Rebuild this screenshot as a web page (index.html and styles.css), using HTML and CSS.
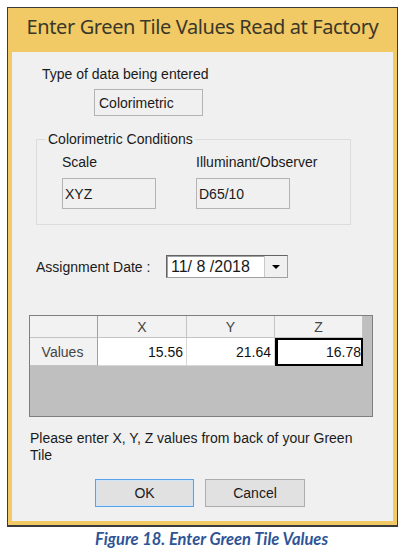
FILE: index.html
```html
<!DOCTYPE html>
<html lang="en">
<head>
    <meta charset="UTF-8">
    <meta name="viewport" content="width=device-width, initial-scale=1.0">
    <title>Enter Green Tile Values</title>
    <link rel="stylesheet" href="styles.css">
</head>
<body>
    <div class="window">
        <div class="titlebar">Enter Green Tile Values Read at Factory</div>
        <div class="client">
            <div class="type-label">Type of data being entered</div>
            <div class="readonly type-box">Colorimetric</div>

            <fieldset class="conditions">
                <legend>Colorimetric Conditions</legend>
                <div class="cond-row">
                    <div class="cond-col scale-col">
                        <div class="cond-label">Scale</div>
                        <div class="readonly cond-box">XYZ</div>
                    </div>
                    <div class="cond-col">
                        <div class="cond-label">Illuminant/Observer</div>
                        <div class="readonly cond-box">D65/10</div>
                    </div>
                </div>
            </fieldset>

            <div class="date-row">
                <span class="date-label">Assignment Date :</span>
                <div class="combo">
                    <span class="combo-text">11/ 8 /2018</span>
                    <span class="combo-btn"><span class="arrow"></span></span>
                </div>
            </div>

            <div class="grid">
                <div class="grid-row">
                    <div class="cell head first"></div>
                    <div class="cell head">X</div>
                    <div class="cell head">Y</div>
                    <div class="cell head">Z</div>
                </div>
                <div class="grid-row">
                    <div class="cell head first value-label">Values</div>
                    <div class="cell value">15.56</div>
                    <div class="cell value">21.64</div>
                    <div class="cell value selected">16.78</div>
                </div>
            </div>

            <p class="hint">Please enter X, Y, Z values from back of your Green Tile</p>

            <div class="buttons">
                <button class="btn default">OK</button>
                <button class="btn cancel">Cancel</button>
            </div>
        </div>
    </div>
    <p class="caption">Figure 18. Enter Green Tile Values</p>
</body>
</html>
```

FILE: styles.css
```css
/* Base */
body {
    margin: 0;
    background: #fff;
    font-family: 'Liberation Sans', Arial, sans-serif;
    font-size: 14px;
    color: #1a1a1a;
}

/* Window frame */
.window {
    box-sizing: border-box;
    width: 391px;
    margin: 7px 0 0 7px;
    border: 1px solid #3a3a3a;
    border-bottom-width: 2px;
    background: #f1c965;
    padding: 0 4px 4px;
}

.titlebar {
    height: 44px;
    box-sizing: border-box;
    padding-top: 5px;
    text-align: center;
    font-family: 'Noto Sans', 'Open Sans', sans-serif;
    font-size: 20px;
    letter-spacing: -0.4px;
    line-height: 28px;
    color: #3a3829;
}

.client {
    height: 469px;
    box-sizing: border-box;
    background: #f0f0f0;
    display: flex;
    flex-direction: column;
    align-items: flex-start;
    line-height: 16px;
}

.type-label {
    margin: 14px 0 0 30px;
}

.readonly {
    box-sizing: border-box;
    border: 1px solid #b4b4b4;
    background: #f0f0f0;
    display: flex;
    align-items: center;
    padding-left: 4px;
}

.type-box {
    margin: 7px 0 0 82px;
    width: 109px;
    height: 27px;
}

/* Group box */
.conditions {
    margin: 15px 0 0 24px;
    padding: 0 0 15px;
    width: 315px;
    box-sizing: border-box;
    border: 1px solid #dcdcdc;
    min-width: 0;
}

.conditions legend {
    margin-left: 9px;
    padding: 0 2px;
}

.cond-row {
    display: flex;
    padding-top: 7px;
}

.cond-col {
    display: flex;
    flex-direction: column;
    align-items: flex-start;
}

.scale-col {
    margin-left: 25px;
    width: 134px;
}

.cond-label {
    margin-bottom: 8px;
}

.cond-box {
    width: 94px;
    height: 31px;
    padding-left: 2px;
}

/* Date picker */
.date-row {
    display: flex;
    align-items: center;
    margin: 30px 0 0 24px;
}

.date-label {
    width: 130px;
}

.combo {
    box-sizing: border-box;
    width: 122px;
    height: 23px;
    display: flex;
    background: #fff;
    border: 1px solid #a0a0a0;
    border-top-color: #646464;
    border-left-color: #646464;
    box-shadow: inset 1px 1px 0 #a0a0a0;
}

.combo-text {
    flex: 1;
    padding-left: 4px;
    font-size: 16px;
    line-height: 21px;
}

.combo-btn {
    width: 22px;
    background: #f0f0f0;
    border-left: 1px solid #c8c8c8;
    display: flex;
    align-items: center;
    justify-content: center;
}

.arrow {
    width: 0;
    height: 0;
    border-left: 4px solid transparent;
    border-right: 4px solid transparent;
    border-top: 4px solid #000;
}

/* Value grid */
.grid {
    box-sizing: border-box;
    margin: 37px 0 0 17px;
    width: 344px;
    height: 102px;
    background: #bfbfbf;
    border: 1px solid #7f7f7f;
}

.grid-row {
    display: flex;
}

.cell {
    box-sizing: border-box;
    border-right: 1px solid #a0a0a0;
    border-bottom: 1px solid #a0a0a0;
    width: 88px;
    height: 22px;
    display: flex;
    align-items: center;
    justify-content: center;
    color: #333;
}

.cell.head {
    background: #f2f2f2;
    border-color: #c4c4c4;
    color: #444;
}

.cell.first {
    width: 68px;
    border-right-color: #a0a0a0;
}

.cell:nth-child(2) {
    width: 89px;
}

.grid-row + .grid-row .cell {
    height: 28px;
}

.value-label {
    justify-content: center;
    padding-right: 2px;
}

.cell.value {
    background: #fff;
    justify-content: flex-end;
    padding-right: 3px;
    color: #111;
    border-color: #d8d8d8;
}

.cell.selected {
    border: 2px solid #000;
    border-left-width: 3px;
    padding-right: 0;
}

.hint {
    margin: 13px 0 0 18px;
    width: 345px;
    line-height: 17px;
    color: #1a1a1a;
}

/* Buttons */
.buttons {
    display: flex;
    gap: 11px;
    margin: 15px 0 0 83px;
}

.btn {
    box-sizing: border-box;
    width: 99px;
    height: 28px;
    font-family: 'Liberation Sans', Arial, sans-serif;
    font-size: 14px;
    color: #1a1a1a;
    background: #e1e1e1;
    border: 1px solid #adadad;
    padding: 0;
}

.btn.default {
    border-color: #5aa2e6;
    box-shadow: inset 0 0 0 1px #cfe4f8;
}

.btn.cancel {
    width: 100px;
}

/* Figure caption */
.caption {
    margin: 3px 0 0 95px;
    font-family: Lato, 'Open Sans', sans-serif;
    font-weight: bold;
    font-style: italic;
    font-size: 16.5px;
    line-height: 19px;
    color: #2f5496;
}
```
